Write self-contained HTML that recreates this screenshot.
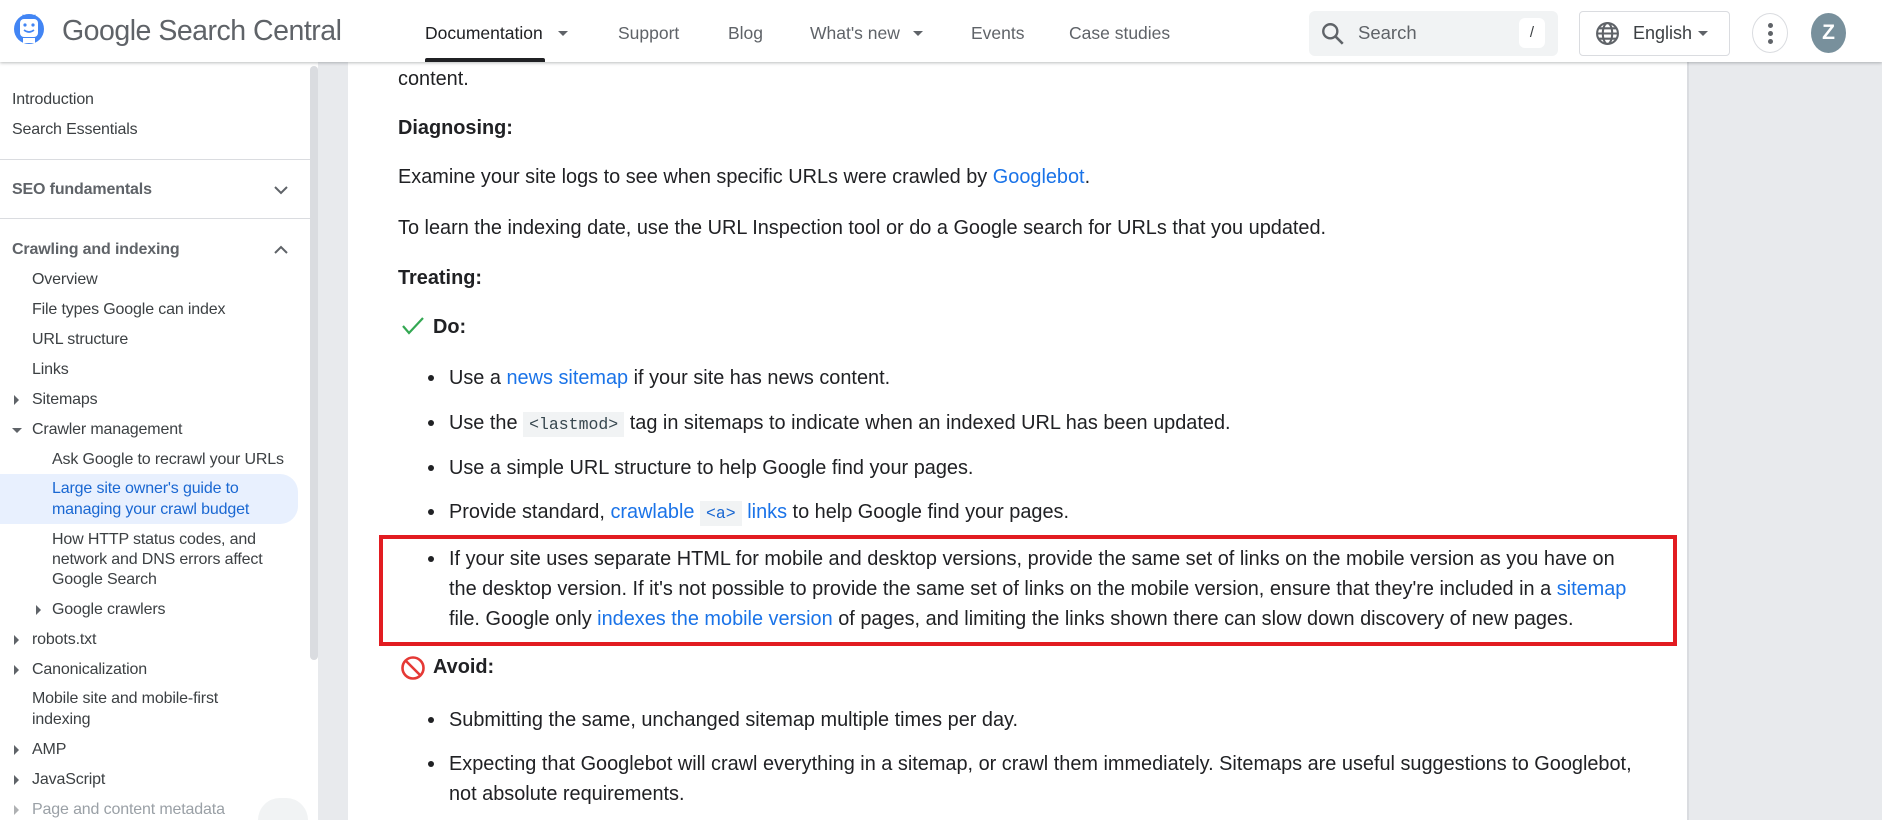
<!DOCTYPE html>
<html style="overflow:hidden;width:1882px;height:820px"><head><meta charset="utf-8"><style>
*{margin:0;padding:0;box-sizing:border-box}
body{width:1882px;height:820px;overflow:hidden;background:#fff;font-family:"Liberation Sans",Arial,sans-serif;position:relative;color:#202124}
.t{position:absolute;white-space:nowrap;line-height:22px}
.s{position:absolute;white-space:nowrap;line-height:20px;font-size:16px;color:#3c4043;letter-spacing:-0.15px}
.c{font-size:19.9px;letter-spacing:0;color:#202124}
a{color:#1a73e8;text-decoration:none}
code{font-family:"Liberation Mono",monospace;font-size:16.5px;background:#f1f3f4;color:#37474f;padding:3px 6px;letter-spacing:0}
.b{font-weight:bold}
.dot{position:absolute;width:6px;height:6px;border-radius:50%;background:#202124}
.arr{position:absolute;width:0;height:0;border-top:5px solid transparent;border-bottom:5px solid transparent;border-left:5px solid #5f6368}
.arrd{position:absolute;width:0;height:0;border-left:5px solid transparent;border-right:5px solid transparent;border-top:5px solid #5f6368}
</style></head><body>
<div style="position:absolute;left:318px;top:0;width:30px;height:820px;background:#e8eaed"></div>
<div style="position:absolute;left:1687px;top:0;width:195px;height:820px;background:#e8eaed;border-left:2px solid #dadce0"></div>
<div style="position:absolute;left:310px;top:66px;width:8px;height:594px;background:#dadce0;border-radius:4px"></div>

<div style="position:absolute;left:0;top:0;width:1882px;height:62px;background:#fff;box-shadow:0 1px 3px rgba(60,64,67,.35);z-index:2">
 <svg style="position:absolute;left:14px;top:9px" width="30" height="40" viewBox="0 0 30 40"><circle cx="15" cy="20" r="15" fill="#4285f4"/><rect x="6" y="10" width="18" height="18" rx="4" fill="#fff"/><path d="M7 10 L9 5 L11 10 L13 5 L15 10 L17 5 L19 10 L21 5 L23 10Z" fill="#4285f4"/><circle cx="11" cy="16" r="1.6" fill="#4285f4"/><circle cx="19" cy="16" r="1.6" fill="#4285f4"/><path d="M10 21 Q15 25 20 21" stroke="#4285f4" stroke-width="1.6" fill="none"/><rect x="9" y="29" width="12" height="5" fill="#fff"/></svg>
 <div class="t" style="left:62px;top:16px;font-size:28.5px;line-height:30px;color:#5f6368;letter-spacing:-0.5px">Google Search Central</div>
 <div class="t" style="left:425px;top:22px;font-size:17.5px;color:#202124;font-weight:500">Documentation</div>
 <div class="arrd" style="left:558px;top:31px"></div>
 <div style="position:absolute;left:425px;top:58px;width:120px;height:4px;background:#202124;border-radius:2px 2px 0 0"></div>
 <div class="t" style="left:618px;top:22px;font-size:17.5px;color:#5f6368">Support</div>
 <div class="t" style="left:728px;top:22px;font-size:17.5px;color:#5f6368">Blog</div>
 <div class="t" style="left:810px;top:22px;font-size:17.5px;color:#5f6368">What's new</div>
 <div class="arrd" style="left:913px;top:31px"></div>
 <div class="t" style="left:971px;top:22px;font-size:17.5px;color:#5f6368">Events</div>
 <div class="t" style="left:1069px;top:22px;font-size:17.5px;color:#5f6368">Case studies</div>
 <div style="position:absolute;left:1309px;top:11px;width:249px;height:45px;background:#f1f3f4;border-radius:6px"></div>
 <svg style="position:absolute;left:1320px;top:21px" width="26" height="26" viewBox="0 0 24 24"><circle cx="9.5" cy="9.5" r="6.5" stroke="#5f6368" stroke-width="2.2" fill="none"/><path d="M14.5 14.5 L21 21" stroke="#5f6368" stroke-width="2.4"/></svg>
 <div class="t" style="left:1358px;top:22px;font-size:18.5px;color:#5f6368">Search</div>
 <div style="position:absolute;left:1519px;top:18px;width:26px;height:30px;background:#fff;border-radius:6px;font-size:15px;text-align:center;line-height:30px;color:#3c4043">/</div>
 <div style="position:absolute;left:1579px;top:11px;width:151px;height:45px;border:1px solid #dadce0;border-radius:4px"></div>
 <svg style="position:absolute;left:1595px;top:21px" width="25" height="25" viewBox="0 0 24 24" fill="none" stroke="#5f6368" stroke-width="2"><circle cx="12" cy="12" r="10"/><ellipse cx="12" cy="12" rx="4.5" ry="10"/><path d="M2 12h20M3.5 7h17M3.5 17h17"/></svg>
 <div class="t" style="left:1633px;top:22px;font-size:18px;color:#3c4043;font-weight:500">English</div>
 <div class="arrd" style="left:1698px;top:31px"></div>
 <div style="position:absolute;left:1752px;top:13px;width:36px;height:40px;border:1px solid #dadce0;border-radius:50%"></div>
 <div style="position:absolute;left:1768px;top:23px;width:5px;height:5px;border-radius:50%;background:#5f6368"></div>
 <div style="position:absolute;left:1768px;top:31px;width:5px;height:5px;border-radius:50%;background:#5f6368"></div>
 <div style="position:absolute;left:1768px;top:39px;width:5px;height:5px;border-radius:50%;background:#5f6368"></div>
 <div style="position:absolute;left:1811px;top:13px;width:35px;height:40px;border-radius:50%;background:#78909c;color:#fff;font-size:21px;text-align:center;line-height:40px;font-weight:bold">Z</div>
</div>

<div class="s" style="left:12px;top:90px">Introduction</div>
<div class="s" style="left:12px;top:120px">Search Essentials</div>
<div style="position:absolute;left:0;top:159px;width:310px;height:1px;background:#dadce0"></div>
<div class="s b" style="left:12px;top:180px;color:#5f6368">SEO fundamentals</div>
<svg style="position:absolute;left:273px;top:184px" width="16" height="12" viewBox="0 0 16 12"><path d="M2 3 L8 9 L14 3" stroke="#5f6368" stroke-width="2" fill="none"/></svg>
<div style="position:absolute;left:0;top:218px;width:310px;height:1px;background:#dadce0"></div>
<div class="s b" style="left:12px;top:240px;color:#5f6368">Crawling and indexing</div>
<svg style="position:absolute;left:273px;top:244px" width="16" height="12" viewBox="0 0 16 12"><path d="M2 9 L8 3 L14 9" stroke="#5f6368" stroke-width="2" fill="none"/></svg>
<div class="s" style="left:32px;top:270px">Overview</div>
<div class="s" style="left:32px;top:300px">File types Google can index</div>
<div class="s" style="left:32px;top:330px">URL structure</div>
<div class="s" style="left:32px;top:360px">Links</div>
<div class="arr" style="left:14px;top:395px"></div>
<div class="s" style="left:32px;top:390px">Sitemaps</div>
<div class="arrd" style="left:12px;top:428px"></div>
<div class="s" style="left:32px;top:420px">Crawler management</div>
<div class="s" style="left:52px;top:450px">Ask Google to recrawl your URLs</div>
<div style="position:absolute;left:0;top:474px;width:298px;height:50px;background:#e8f0fe;border-radius:0 18px 18px 0"></div>
<div class="s" style="left:52px;top:479px;color:#1967d2;font-weight:500">Large site owner's guide to</div>
<div class="s" style="left:52px;top:500px;color:#1967d2;font-weight:500">managing your crawl budget</div>
<div class="s" style="left:52px;top:530px">How HTTP status codes, and</div>
<div class="s" style="left:52px;top:550px">network and DNS errors affect</div>
<div class="s" style="left:52px;top:570px">Google Search</div>
<div class="arr" style="left:36px;top:605px"></div>
<div class="s" style="left:52px;top:600px">Google crawlers</div>
<div class="arr" style="left:14px;top:635px"></div>
<div class="s" style="left:32px;top:630px">robots.txt</div>
<div class="arr" style="left:14px;top:665px"></div>
<div class="s" style="left:32px;top:660px">Canonicalization</div>
<div class="s" style="left:32px;top:689px">Mobile site and mobile-first</div>
<div class="s" style="left:32px;top:710px">indexing</div>
<div class="arr" style="left:14px;top:745px"></div>
<div class="s" style="left:32px;top:740px">AMP</div>
<div class="arr" style="left:14px;top:775px"></div>
<div class="s" style="left:32px;top:770px">JavaScript</div>
<div class="arr" style="left:14px;top:805px;opacity:.5"></div>
<div class="s" style="left:32px;top:800px;color:#9aa0a6">Page and content metadata</div>
<div style="position:absolute;left:258px;top:798px;width:50px;height:22px;border-radius:25px 25px 0 0;background:#f1f3f4"></div>

<div class="t c" style="left:398px;top:68px">content.</div>
<div class="t c b" style="left:398px;top:117px">Diagnosing:</div>
<div class="t c" style="left:398px;top:166px">Examine your site logs to see when specific URLs were crawled by <a>Googlebot</a>.</div>
<div class="t c" style="left:398px;top:217px">To learn the indexing date, use the URL Inspection tool or do a Google search for URLs that you updated.</div>
<div class="t c b" style="left:398px;top:267px">Treating:</div>
<svg style="position:absolute;left:401px;top:316px" width="24" height="20" viewBox="0 0 24 20"><path d="M2 10 L8 17 L22 2" stroke="#34a853" stroke-width="2.2" fill="none"/></svg>
<div class="t c b" style="left:433px;top:316px">Do:</div>

<div class="dot" style="left:428px;top:375px"></div>
<div class="t c" style="left:449px;top:367px">Use a <a>news sitemap</a> if your site has news content.</div>
<div class="dot" style="left:428px;top:420px"></div>
<div class="t c" style="left:449px;top:412px">Use the <code>&lt;lastmod&gt;</code> tag in sitemaps to indicate when an indexed URL has been updated.</div>
<div class="dot" style="left:428px;top:465px"></div>
<div class="t c" style="left:449px;top:457px">Use a simple URL structure to help Google find your pages.</div>
<div class="dot" style="left:428px;top:509px"></div>
<div class="t c" style="left:449px;top:501px">Provide standard, <a>crawlable <code style="color:#1967d2">&lt;a&gt;</code> links</a> to help Google find your pages.</div>

<div style="position:absolute;left:379px;top:535px;width:1298px;height:111px;border:4px solid #e21c21"></div>
<div class="dot" style="left:428px;top:556px"></div>
<div class="t c" style="left:449px;top:548px">If your site uses separate HTML for mobile and desktop versions, provide the same set of links on the mobile version as you have on</div>
<div class="t c" style="left:449px;top:578px">the desktop version. If it's not possible to provide the same set of links on the mobile version, ensure that they're included in a <a>sitemap</a></div>
<div class="t c" style="left:449px;top:608px">file. Google only <a>indexes the mobile version</a> of pages, and limiting the links shown there can slow down discovery of new pages.</div>

<svg style="position:absolute;left:400px;top:655px" width="26" height="26" viewBox="0 0 26 26"><circle cx="13" cy="13" r="10.5" stroke="#e53935" stroke-width="2.6" fill="none"/><path d="M6 6 L20 20" stroke="#e53935" stroke-width="2.6"/></svg>
<div class="t c b" style="left:433px;top:656px">Avoid:</div>
<div class="dot" style="left:428px;top:717px"></div>
<div class="t c" style="left:449px;top:709px">Submitting the same, unchanged sitemap multiple times per day.</div>
<div class="dot" style="left:428px;top:761px"></div>
<div class="t c" style="left:449px;top:753px">Expecting that Googlebot will crawl everything in a sitemap, or crawl them immediately. Sitemaps are useful suggestions to Googlebot,</div>
<div class="t c" style="left:449px;top:783px">not absolute requirements.</div>
</body></html>
